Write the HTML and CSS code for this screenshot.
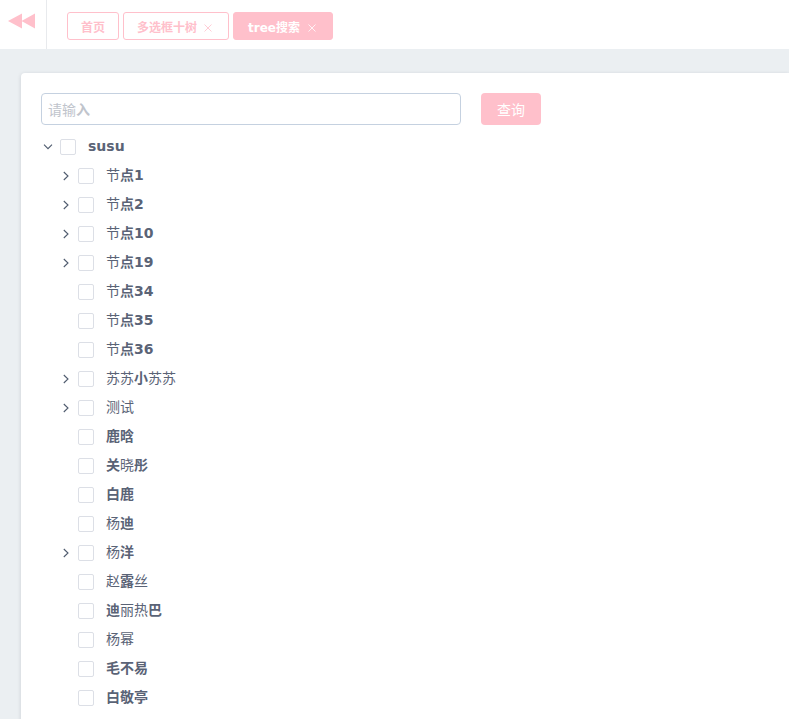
FILE: index.html
```html
<!DOCTYPE html>
<html lang="zh">
<head>
<meta charset="utf-8">
<title>tree搜索</title>
<link rel="stylesheet" href="styles.css">
</head>
<body>
<header class="topbar">
  <div class="collapse">
    <svg class="collapse-icon" width="28" height="16" viewBox="0 0 28 16"><path d="M0 8 L14 0.5 V15.5 Z M13.5 8 L27 0.5 V15.5 Z"/></svg>
  </div>
  <nav class="tabs">
    <span class="tab"><b>首页</b></span>
    <span class="tab"><b>多选框十树</b><svg class="close" viewBox="0 0 8 8"><path d="M0.5 0.5 L7.5 7.5 M7.5 0.5 L0.5 7.5"/></svg></span>
    <span class="tab active"><b>tree搜索</b><svg class="close" viewBox="0 0 8 8"><path d="M0.5 0.5 L7.5 7.5 M7.5 0.5 L0.5 7.5"/></svg></span>
  </nav>
</header>
<main class="content">
  <section class="card">
    <form class="search">
      <div class="input"><span class="thin">请输</span><b>入</b></div>
      <button class="query" type="button">查询</button>
    </form>
    <ul class="tree">
      <li class="row root"><svg class="arrow" viewBox="0 0 10 10"><path d="M1 2.7 L5 6.7 L9 2.7"/></svg><span class="check"></span><b class="label">susu</b></li>
      <li class="row"><svg class="arrow" viewBox="0 0 10 10"><path d="M2.8 1 L7 5 L2.8 9"/></svg><span class="check"></span><span class="label">节<b>点1</b></span></li>
      <li class="row"><svg class="arrow" viewBox="0 0 10 10"><path d="M2.8 1 L7 5 L2.8 9"/></svg><span class="check"></span><span class="label">节<b>点2</b></span></li>
      <li class="row"><svg class="arrow" viewBox="0 0 10 10"><path d="M2.8 1 L7 5 L2.8 9"/></svg><span class="check"></span><span class="label">节<b>点10</b></span></li>
      <li class="row"><svg class="arrow" viewBox="0 0 10 10"><path d="M2.8 1 L7 5 L2.8 9"/></svg><span class="check"></span><span class="label">节<b>点19</b></span></li>
      <li class="row leaf"><span class="check"></span><span class="label">节<b>点34</b></span></li>
      <li class="row leaf"><span class="check"></span><span class="label">节<b>点35</b></span></li>
      <li class="row leaf"><span class="check"></span><span class="label">节<b>点36</b></span></li>
      <li class="row"><svg class="arrow" viewBox="0 0 10 10"><path d="M2.8 1 L7 5 L2.8 9"/></svg><span class="check"></span><span class="label">苏苏<b>小</b>苏苏</span></li>
      <li class="row"><svg class="arrow" viewBox="0 0 10 10"><path d="M2.8 1 L7 5 L2.8 9"/></svg><span class="check"></span><span class="label">测试</span></li>
      <li class="row leaf"><span class="check"></span><span class="label"><b>鹿晗</b></span></li>
      <li class="row leaf"><span class="check"></span><span class="label"><b>关</b>晓<b>彤</b></span></li>
      <li class="row leaf"><span class="check"></span><span class="label"><b>白鹿</b></span></li>
      <li class="row leaf"><span class="check"></span><span class="label">杨<b>迪</b></span></li>
      <li class="row"><svg class="arrow" viewBox="0 0 10 10"><path d="M2.8 1 L7 5 L2.8 9"/></svg><span class="check"></span><span class="label">杨<b>洋</b></span></li>
      <li class="row leaf"><span class="check"></span><span class="label">赵<b>露</b>丝</span></li>
      <li class="row leaf"><span class="check"></span><span class="label"><b>迪</b>丽热<b>巴</b></span></li>
      <li class="row leaf"><span class="check"></span><span class="label">杨幂</span></li>
      <li class="row leaf"><span class="check"></span><span class="label"><b>毛不易</b></span></li>
      <li class="row leaf"><span class="check"></span><span class="label"><b>白敬亭</b></span></li>
    </ul>
  </section>
</main>
</body>
</html>
```
FILE: styles.css
```css
* { box-sizing: border-box; }
html, body { margin: 0; height: 100%; }
body {
  overflow: hidden;
  background: #ebeff2;
  font-family: "DejaVu Sans", "Noto Sans CJK SC", sans-serif;
  font-size: 14px;
  color: #5a6376;
}
.topbar {
  display: flex;
  height: 49px;
  background: #fff;
}
.collapse {
  width: 47px;
  height: 49px;
  padding: 13px 0 0 8px;
  border-right: 1px solid #e8eaed;
  flex: none;
}
.collapse-icon { display: block; fill: #ffc0cb; }
.tabs {
  display: flex;
  gap: 4px;
  padding: 12px 0 0 20px;
}
.tab {
  display: flex;
  align-items: center;
  height: 28px;
  padding: 3px 13px 0;
  border: 1px solid #ffc0cb;
  border-radius: 3px;
  color: #ffc0cb;
  font-size: 12px;
  line-height: 1;
  white-space: nowrap;
}
.tab.active {
  padding-left: 14px;
  background: #ffc0cb;
  color: #fff;
}
.close {
  flex: none;
  width: 8px;
  height: 8px;
  margin: 0 3px 0 7px;
  fill: none;
  stroke: currentColor;
  stroke-width: 0.8;
}
.active .close { margin-left: 8px; }
.content { padding: 24px 0 0 21px; }
.card {
  height: 660px;
  padding: 20px 0 0 20px;
  background: #fff;
  border-radius: 4px 0 0 0;
  box-shadow: 0 1px 4px rgba(0, 21, 41, 0.14);
}
.search {
  display: flex;
  gap: 20px;
  margin: 0;
}
.input {
  width: 420px;
  height: 32px;
  padding: 0 6px;
  border: 1px solid #c5d1e0;
  border-radius: 4px;
  color: #c0c4cc;
  line-height: 32px;
}
.query {
  width: 60px;
  height: 32px;
  padding: 0;
  border: 0;
  border-radius: 4px;
  background: #ffc0cb;
  color: #fff;
  font: inherit;
}
.tree {
  list-style: none;
  margin: 7px 0 0;
  padding: 0;
}
.row {
  display: flex;
  align-items: center;
  height: 29px;
  padding-left: 18px;
  line-height: 1;
}
.row.root { padding-left: 0; }
.row.leaf { padding-left: 37px; }
.arrow {
  flex: none;
  width: 10px;
  height: 10px;
  margin: 0 7px 0 2px;
  fill: none;
  stroke: #4f5b6e;
  stroke-width: 1.1;
}
.check {
  flex: none;
  width: 16px;
  height: 16px;
  border: 1px solid #dcdfe6;
  border-radius: 2px;
  background: #fff;
}
.label { margin: 0 0 2px 12px; white-space: nowrap; }
```
